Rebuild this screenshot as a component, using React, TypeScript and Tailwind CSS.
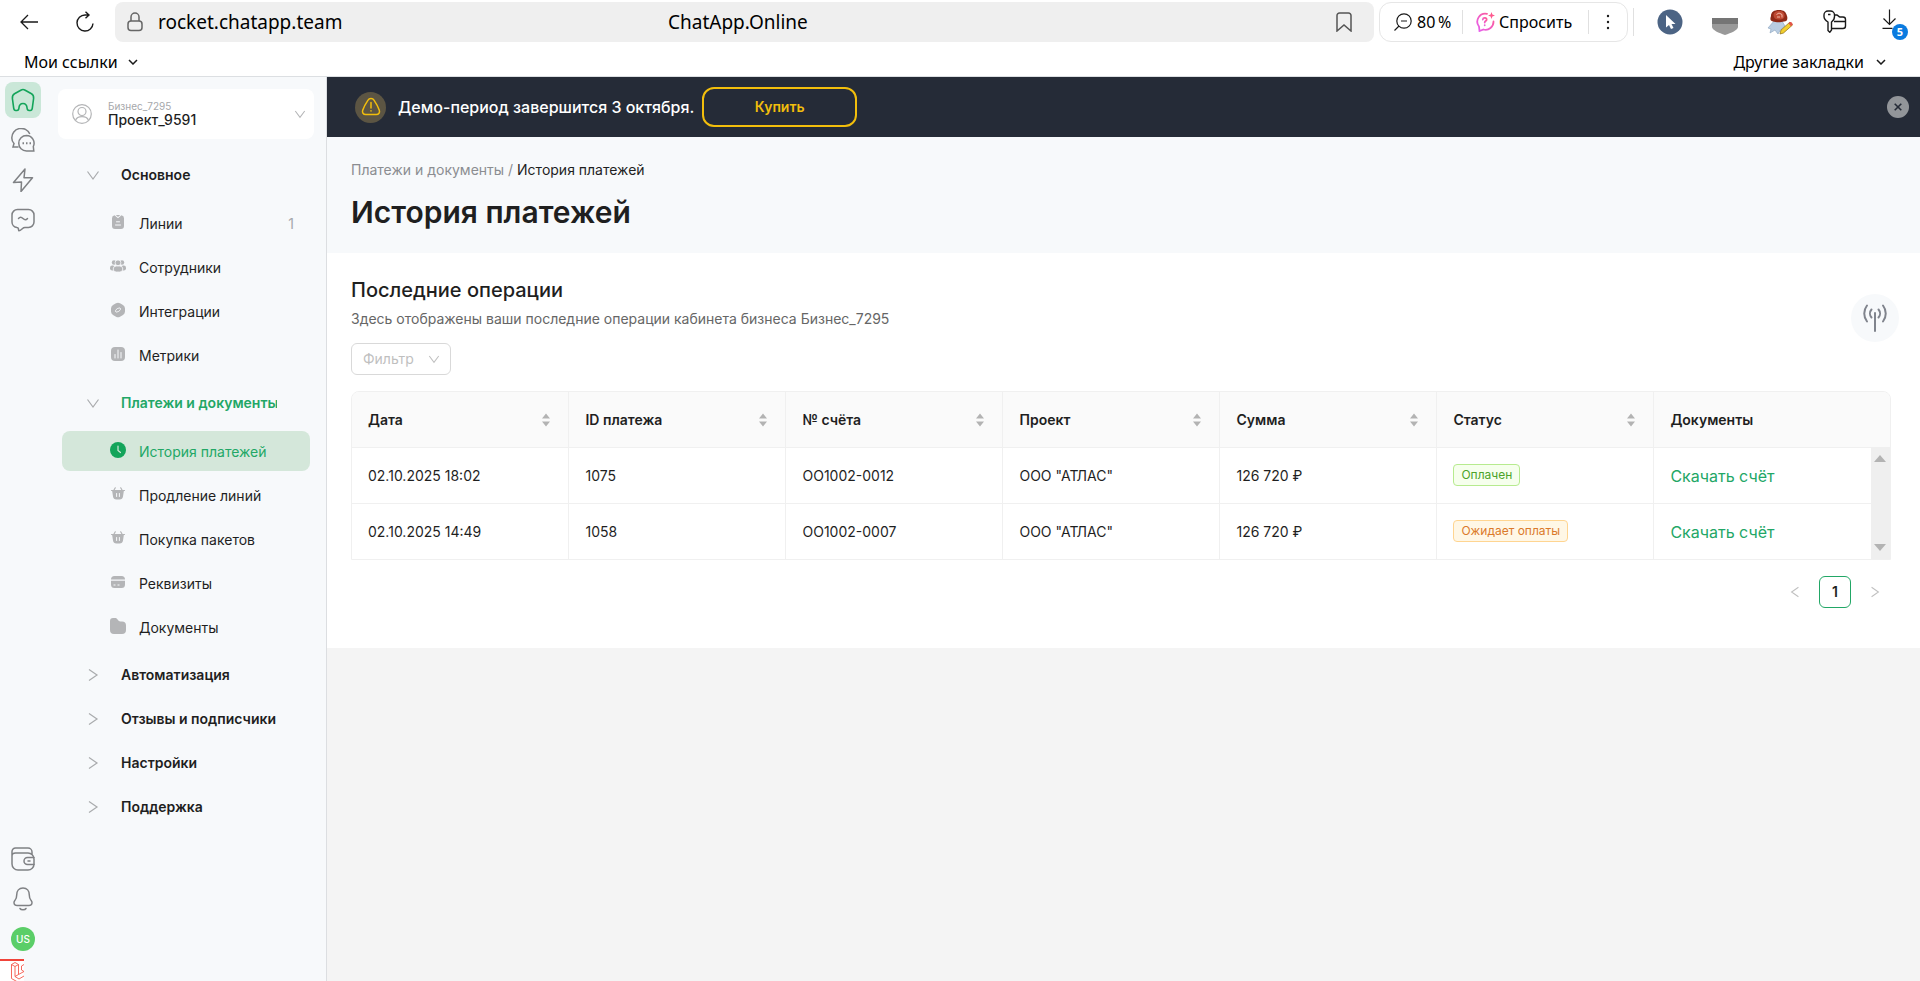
import type { ReactNode } from "react";

type IconProps = { className?: string };

const ChevronDown = ({ className = "" }: IconProps) => (
  <svg viewBox="0 0 14 14" className={className} fill="none" stroke="currentColor" strokeWidth="1.2">
    <path d="M1.5 3.5 7 11l5.5-7.5" />
  </svg>
);

const ChevronRight = ({ className = "" }: IconProps) => (
  <svg viewBox="0 0 14 14" className={className} fill="none" stroke="currentColor" strokeWidth="1.2">
    <path d="M3 1.5 11 7l-8 5.5" />
  </svg>
);

const SmallChevron = () => (
  <svg viewBox="0 0 10 6" className="w-[10px] h-[6px]" fill="none" stroke="#1a1a1a" strokeWidth="1.5">
    <path d="M1 1l4 4 4-4" />
  </svg>
);

const navIcons: Record<string, ReactNode> = {
  lines: (
    <svg viewBox="0 0 16 16" className="size-4" fill="#b4b5b7">
      <path d="M4.500 1.300 8 4.200l3.500-2.900A3 3 0 0 1 14 4.300v7.700a3 3 0 0 1-3 3H5a3 3 0 0 1-3-3V4.300A3 3 0 0 1 4.500 1.300z" />
      <path d="M5.700 1h4.600L8 2.900z" />
      <path d="M6.500 7.800h3M5.500 11h5" stroke="#f7f9fb" strokeLinecap="round" />
    </svg>
  ),
  staff: (
    <svg viewBox="0 0 16 16" className="size-4" fill="#b4b5b7">
      <circle cx="4" cy="4.500" r="2.200" />
      <circle cx="12" cy="4.500" r="2.200" />
      <circle cx="8" cy="4.800" r="2.900" stroke="#f7f9fb" strokeWidth=".8" />
      <rect x="0" y="7.500" width="5" height="5" rx="2.200" />
      <rect x="11" y="7.500" width="5" height="5" rx="2.200" />
      <rect x="3.200" y="8" width="9.600" height="6" rx="3" stroke="#f7f9fb" strokeWidth=".8" />
    </svg>
  ),
  integrations: (
    <svg viewBox="0 0 16 16" className="size-4" fill="#b4b5b7">
      <path d="M6 1.300a4 4 0 0 1 4 0l3 1.700a4 4 0 0 1 2 3.400v3.200a4 4 0 0 1-2 3.400l-3 1.700a4 4 0 0 1-4 0l-3-1.700a4 4 0 0 1-2-3.400V6.400A4 4 0 0 1 3 3z" />
      <path d="M7.200 10c-1.900.5-2.200-1.200-1-2.400s2.100-1.600 2.700-1.100M8.800 6c1.900-.5 2.200 1.200 1 2.400s-2.100 1.600-2.700 1.100" stroke="#f7f9fb" fill="none" />
    </svg>
  ),
  metrics: (
    <svg viewBox="0 0 16 16" className="size-4" fill="#b4b5b7">
      <rect x="1" y="1" width="14" height="14" rx="4" />
      <path d="M5 8.500V12M8 4v8M11 6.500V12" stroke="#f7f9fb" strokeLinecap="round" />
    </svg>
  ),
  history: (
    <svg viewBox="0 0 16 16" className="size-4">
      <circle cx="8" cy="8" r="8" fill="#13a45a" />
      <path d="M8 4v4.500l2.500 2" stroke="#d4e7da" strokeWidth="1.200" fill="none" strokeLinecap="round" />
    </svg>
  ),
  basket: (
    <svg viewBox="0 0 16 16" className="size-4" fill="#b4b5b7">
      <path d="M4 4 5.300 1.800M12 4l-1.300-2.200M1.500 4.500h13" stroke="#b4b5b7" strokeLinecap="round" strokeWidth="1.200" />
      <path d="M2 4h12l-1 6.500A3.500 3.500 0 0 1 9.600 13.500H6.400A3.500 3.500 0 0 1 3 10.500z" />
      <path d="M6.600 7.500v3M9.400 7.500v3" stroke="#f7f9fb" strokeLinecap="round" />
    </svg>
  ),
  card: (
    <svg viewBox="0 0 16 16" className="size-4" fill="#b4b5b7">
      <path d="M1 5.500A3.500 3.500 0 0 1 4.500 2h7A3.500 3.500 0 0 1 15 5.500zM1 6.700h14v3.800a3.500 3.500 0 0 1-3.500 3.500h-7A3.500 3.500 0 0 1 1 10.500z" />
      <path d="M3.500 11h2M7.500 11h2" stroke="#f7f9fb" />
    </svg>
  ),
  folder: (
    <svg viewBox="0 0 16 16" className="size-4" fill="#b4b5b7">
      <path d="M0 3a3 3 0 0 1 3-3h2c1.500 0 2 .6 2.600 1.600S9 3.400 10.500 3.400H12a4 4 0 0 1 4 4V12a4 4 0 0 1-4 4H4a4 4 0 0 1-4-4z" />
    </svg>
  ),
};

type NavItem = { label: string; icon: string; count?: number; active?: boolean };
type NavGroup = { label: string; open?: boolean; active?: boolean; items?: NavItem[] };

const navGroups: NavGroup[] = [
  {
    label: "Основное",
    open: true,
    items: [
      { label: "Линии", icon: "lines", count: 1 },
      { label: "Сотрудники", icon: "staff" },
      { label: "Интеграции", icon: "integrations" },
      { label: "Метрики", icon: "metrics" },
    ],
  },
  {
    label: "Платежи и документы",
    open: true,
    active: true,
    items: [
      { label: "История платежей", icon: "history", active: true },
      { label: "Продление линий", icon: "basket" },
      { label: "Покупка пакетов", icon: "basket" },
      { label: "Реквизиты", icon: "card" },
      { label: "Документы", icon: "folder" },
    ],
  },
  { label: "Автоматизация" },
  { label: "Отзывы и подписчики" },
  { label: "Настройки" },
  { label: "Поддержка" },
];

const columns = ["Дата", "ID платежа", "№ счёта", "Проект", "Сумма", "Статус"];

const payments = [
  { date: "02.10.2025 18:02", id: "1075", invoice: "ОО1002-0012", project: 'ООО "АТЛАС"', sum: "126 720 ₽", status: "Оплачен", paid: true },
  { date: "02.10.2025 14:49", id: "1058", invoice: "ОО1002-0007", project: 'ООО "АТЛАС"', sum: "126 720 ₽", status: "Ожидает оплаты", paid: false },
];

function BrowserBar() {
  return (
    <div className="border-b border-[#dcdfe2] bg-white font-['Noto_Sans',sans-serif] text-black">
      <div className="flex items-center pt-[2px] h-[42px]">
        <button aria-label="Назад" className="ml-5">
          <svg viewBox="0 0 18 16" className="w-[18px] h-4" fill="none" stroke="#1a1a1a" strokeWidth="1.300">
            <path d="M8 1 1 8l7 7M1 8h17" />
          </svg>
        </button>
        <button aria-label="Обновить" className="ml-[38px]">
          <svg viewBox="0 0 18 22" className="w-[18px] h-[22px]" fill="none" stroke="#1a1a1a" strokeWidth="1.400">
            <path d="M13 4H9a8 8 0 1 0 8 8.500M9.500.7 13 4 9.500 7.300" />
          </svg>
        </button>
        <div className="ml-[21px] flex h-10 flex-1 items-center rounded-lg bg-[#efefef] px-3">
          <svg viewBox="0 0 16 20" className="mr-[15px] w-4 h-5 shrink-0" fill="none" stroke="#666" strokeWidth="1.500">
            <rect x="1" y="9" width="14" height="9.500" rx="3" />
            <path d="M4 9V5a4 4 0 0 1 8 0v4" />
          </svg>
          <span className="w-[510px] text-[19px]">rocket.chatapp.team</span>
          <span className="flex-1 text-[19px]">ChatApp.Online</span>
          <svg viewBox="0 0 16 20" className="mr-[10px] w-4 h-5" fill="none" stroke="#555" strokeWidth="1.500">
            <path d="M1 19V3.500A2.500 2.500 0 0 1 3.500 1h9A2.500 2.500 0 0 1 15 3.500V19l-7-6z" />
          </svg>
        </div>
        <div className="ml-[5px] flex h-10 w-[249px] items-center rounded-xl border border-[#e6e6e6] text-base">
          <button className="flex w-[83px] items-center gap-[5px] border-r border-[#e0e0e0] pl-[14px]">
            <svg viewBox="0 0 18 18" className="size-[18px]" fill="none" stroke="#1a1a1a" strokeWidth="1.200">
              <circle cx="10" cy="8" r="7.200" />
              <path d="M7 8h6M5 13l-4.500 4.500" />
            </svg>
            <span>80{"\u2009"}%</span>
          </button>
          <button className="flex w-[126px] items-center gap-1 border-r border-[#e0e0e0] pl-3">
            <svg viewBox="0 0 20 20" className="size-5" fill="none" stroke="url(#ask)" strokeWidth="1.800" strokeLinecap="round">
              <defs>
                <linearGradient id="ask" x1="0" y1="1" x2="1" y2="0">
                  <stop offset="0" stopColor="#e560f0" />
                  <stop offset="1" stopColor="#ff5a90" />
                </linearGradient>
              </defs>
              <path d="M12 1.800A8 8 0 0 0 4 14.500l.5 4.500 4-1.500A8 8 0 0 0 18.500 9.500" />
              <path d="M7.800 7.500c.3-2.300 4.200-2 3.800.2-.3 1.300-1.900 1.300-1.900 2.800M9.700 13.200v.1" />
              <path d="M16.500 0l.9 2.600L20 3.500l-2.600.9-.9 2.600-.9-2.600-2.600-.9 2.600-.9z" fill="#ff5a90" stroke="none" />
            </svg>
            <span>Спросить</span>
          </button>
          <button aria-label="Меню" className="flex flex-1 justify-center">
            <svg viewBox="0 0 4 16" className="w-1 h-4" fill="#1a1a1a">
              <circle cx="2" cy="2" r="1.200" />
              <circle cx="2" cy="8" r="1.200" />
              <circle cx="2" cy="14" r="1.200" />
            </svg>
          </button>
        </div>
        <div className="ml-[5px] flex items-center border-l border-[#e0e0e0] pl-[23px]">
          <svg viewBox="0 0 26 26" className="size-[26px]">
            <circle cx="13" cy="13" r="12.500" fill="#4c6484" />
            <path d="M9 6v12.500l3-2.500 2 4 2.500-1-2-4h4z" fill="#fff" />
          </svg>
          <svg viewBox="0 0 26 26" className="ml-[29px] size-[26px]">
            <path d="M0 9h26v6H0z" fill="#757575" />
            <path d="M0 15h26v3c0 3-7 6-13 8-6-2-13-5-13-8z" fill="#999" />
          </svg>
          <svg viewBox="0 0 26 26" className="ml-[29px] size-[26px]">
            <path d="M7 12 1 19l3 1-1 4 5-3 3 4 3-5 4-3-3-5z" fill="#b9cde2" stroke="#8aa2bd" strokeWidth=".6" />
            <path d="M4 7c0-4 3-6 8-6s7 2 8 6c1 3 0 5.500-3 5.500-3 1-8 1-11 0C3 12 3 10 4 7z" fill="#8f2a18" />
            <path d="M6.500 6c0-3 3-4 6-4s5 1.500 5 4.500-2 4-5.500 4-5.500-1.500-5.500-4.500z" fill="#bf4a33" />
            <path d="M9.500 5.500l2.500-1.500 3 1.500v3M10 8h3" stroke="#f0b8a8" fill="none" />
            <path d="m13 25 1-4 9-8 2.500 3-9 8z" fill="#f2cf2e" stroke="#8a6a10" strokeWidth=".7" />
            <path d="m21.500 14.500 1.500-1.500c1.500-.5 3 1.500 2.500 3l-1.500 1.300z" fill="#e2544a" />
          </svg>
          <svg viewBox="0 0 24 24" className="ml-[30px] size-6" fill="none" stroke="#1a1a1a" strokeWidth="1.400" strokeLinejoin="round">
            <path d="M5 12C2.500 10.500 1 9.500 1 6.500V5a4 4 0 0 1 4-4h2.500a4 4 0 0 1 4 4v1.500c0 3-1.500 4.500-3 5.500v8l-1.750 2.300L5 20.500zM5 4.500h2.500" />
            <path d="M11.500 5h2.200c1.300 0 2 2 3.300 2h3a2.500 2.500 0 0 1 2.500 2.500V16a2.500 2.500 0 0 1-2.500 2.500H8.500M11 11.500h11.500" />
          </svg>
          <div className="relative ml-[34px] mr-2 w-[31px] h-7">
            <svg viewBox="0 0 20 22" className="w-5 h-[22px]" fill="none" stroke="#1a1a1a" strokeWidth="1.200">
              <path d="M8.500 1.500v15M2.500 10.500l6 6 6-6M1.500 20.300h10" />
            </svg>
            <span className="absolute right-1 -bottom-1 flex size-4 items-center justify-center rounded-full bg-[#0a7be0] text-[11px] font-bold text-white">5</span>
          </div>
        </div>
      </div>
      <div className="flex h-[34px] items-center justify-between pt-[6px] pr-[34px] pl-6 text-base">
        <button className="flex items-center gap-[10px]">Мои ссылки <SmallChevron /></button>
        <button className="flex items-center gap-3">Другие закладки <SmallChevron /></button>
      </div>
    </div>
  );
}

function IconRail() {
  return (
    <div className="flex w-[46px] shrink-0 flex-col items-center bg-[#f7f9fb] pt-[5px] text-[#7f8184]">
      <button aria-label="Главная" className="flex size-9 items-center justify-center rounded-lg bg-[#cae7d8]">
        <svg viewBox="0 0 24 24" className="size-6" fill="none" stroke="#13a45a" strokeWidth="1.600" strokeLinejoin="round">
          <path d="M12 1.500c.7 0 1.500.3 2.200.7l6.300 3.500c1.500.9 2.300 2.600 2.100 4.800l-1.300 9.700c-.2 1.500-.8 2.300-2 2.300h-1.200c-1.200 0-1.900-.8-2-2.200-.2-2.800-1-4.800-4.100-4.800s-3.900 2-4.100 4.800c-.1 1.400-.8 2.200-2 2.200H4.700c-1.200 0-1.800-.8-2-2.300l-1.300-9.700c-.2-2.200.6-3.900 2.100-4.800l6.300-3.500c.7-.4 1.500-.7 2.200-.7z" />
        </svg>
      </button>
      <button aria-label="Чаты" className="mt-[10px]">
        <svg viewBox="0 0 24 24" className="size-6" fill="none" stroke="currentColor" strokeWidth="1.500">
          <path d="M7.500 19H2l1-3.500C1.500 14 .8 12 .8 10a9.400 9.400 0 0 1 18-4" />
          <path d="M15.500 7.500a7.700 7.700 0 0 1 6.800 11l.5 4.500H15.500a7.750 7.750 0 1 1 0-15.500z" />
          <path d="M11.500 15.300h1.500M15 15.300h1.500M18.500 15.300H20" strokeWidth="2" />
        </svg>
      </button>
      <button aria-label="Автоматизация" className="mt-4">
        <svg viewBox="0 0 24 24" className="size-6" fill="none" stroke="currentColor" strokeWidth="1.500" strokeLinejoin="round">
          <path d="M14 1 2.500 14.500 10.500 14 10 23.500 21.500 9.800H13z" />
        </svg>
      </button>
      <button aria-label="Сообщения" className="mt-4">
        <svg viewBox="0 0 24 24" className="size-6" fill="none" stroke="currentColor" strokeWidth="1.500" strokeLinecap="round" strokeLinejoin="round">
          <path d="M6.500 1.500h11a5.500 5.500 0 0 1 5.500 5.500v7a5.500 5.500 0 0 1-5.500 5.500h-3.500c-1.500 0-2 .6-3 1.500s-2 1.800-3 1.800.3-3.300-2-3.300A5.500 5.500 0 0 1 1 14V7a5.500 5.500 0 0 1 5.500-5.500z" />
          <path d="M7.500 10.500c1.500-1.800 2.800-1.600 4.500 0s3 1.800 4.500 0" />
        </svg>
      </button>
      <button aria-label="Кошелёк" className="mt-auto">
        <svg viewBox="0 0 24 24" className="size-6" fill="none" stroke="currentColor" strokeWidth="1.500" strokeLinecap="round">
          <path d="M1 7v10a6 6 0 0 0 6 6h10a6 6 0 0 0 6-6v-5a6 6 0 0 0-6-6H4.500C2.500 6 1 7 1 9V4.500A3.500 3.500 0 0 1 4.500 1H17a4 4 0 0 1 4 4v2" />
          <path d="M23 10.500h-6.500a3.500 3.500 0 0 0 0 7H23M17 14h2" />
        </svg>
      </button>
      <button aria-label="Уведомления" className="mt-4">
        <svg viewBox="0 0 24 24" className="size-6" fill="none" stroke="currentColor" strokeWidth="1.500" strokeLinecap="round">
          <path d="M12 1c4 0 6.300 3 6.300 7 0 3.500.7 4 1.900 5.500 1.800 2.300.6 5-2.200 5H6c-2.800 0-4-2.700-2.200-5C5 12 5.700 11.500 5.700 8c0-4 2.300-7 6.300-7z" />
          <path d="M9 21.500c1 1.700 5 1.700 6 0" />
        </svg>
      </button>
      <button className="mt-4 size-6 rounded-full bg-[#5bce68] text-[10px] font-medium text-white">US</button>
      <div className="mt-2 h-[22px] w-6 self-start border-t-2 border-[#f0443a] bg-white">
        <svg viewBox="0 0 24 20" className="w-6 h-5" fill="none" stroke="#f4584c" strokeWidth=".9">
          <path d="M11.500 3.500 15 1.500 18.500 3.500v10L24 10.500M11.500 3.500v14l7 4M11.500 3.500 15 5.500v10l3.500-2M15 5.500l3.500-2M24 3.500l-2.500 1.500V9L24 10.500M15 15.500l4 2.500 5-3" />
        </svg>
      </div>
    </div>
  );
}

function Sidebar() {
  return (
    <aside className="w-[281px] shrink-0 border-r border-[#dcdee1] bg-[#f7f9fb] pt-3 pr-3 pl-3">
      <button className="flex h-[50px] w-full items-center rounded-lg bg-white px-[14px] text-left">
        <svg viewBox="0 0 20 20" className="size-5" fill="none" stroke="#b4b5b7" strokeWidth="1.200">
          <circle cx="10" cy="10" r="9.300" />
          <circle cx="10" cy="7.500" r="4" />
          <path d="M3.500 16.500c1-3 4-3.800 6.500-3.800s5.500.8 6.500 3.800" />
        </svg>
        <span className="ml-4 flex flex-1 flex-col">
          <span className="text-[10px] leading-3 text-[#a6a8ab]">Бизнес_7295</span>
          <span className="text-sm leading-4 font-medium">Проект_9591</span>
        </span>
        <ChevronDown className="-mr-[6px] size-3 text-[#b4b5b7]" />
      </button>
      <nav className="mt-4 flex flex-col gap-1 px-1">
        {navGroups.map((group) => (
          <div key={group.label}>
            <button
              className={`flex h-10 w-full items-center pl-6 text-left text-sm font-semibold ${group.active ? "text-[#22a766]" : ""}`}
            >
              {group.open ? (
                <ChevronDown className="size-[14px] text-[#a9abad]" />
              ) : (
                <ChevronRight className="size-[14px] text-[#a9abad]" />
              )}
              <span className="ml-[21px] w-[156px] overflow-hidden whitespace-nowrap">{group.label}</span>
            </button>
            {group.items && (
              <ul className="flex flex-col gap-1 pt-2 pb-1">
                {group.items.map((item) => (
                  <li key={item.label}>
                    <a
                      href="#"
                      className={`flex h-10 items-center rounded-lg pt-[2px] pr-4 pl-12 text-sm ${item.active ? "bg-[#d4e7da] text-[#22a766]" : ""}`}
                    >
                      <span className="mb-1">{navIcons[item.icon]}</span>
                      <span className="ml-[13px] flex-1">{item.label}</span>
                      {item.count && <span className="text-[#a6a8ab]">{item.count}</span>}
                    </a>
                  </li>
                ))}
              </ul>
            )}
          </div>
        ))}
      </nav>
    </aside>
  );
}

function DemoBanner() {
  return (
    <div className="flex h-[60px] items-center bg-[#252b37] pr-[11px] pl-7">
      <span className="flex size-[31px] items-center justify-center rounded-full bg-[#5c5543]">
        <svg viewBox="0 0 20 20" className="size-5" fill="none" stroke="#f2be0c" strokeWidth="1.500" strokeLinecap="round">
          <path d="M7 3.200C8.300.8 11.700.8 13 3.200c2 3 4.200 7 5.300 10 .8 2.300-.6 4.300-3 4.300H4.700c-2.400 0-3.800-2-3-4.300 1.100-3 3.300-7 5.300-10zM10 5.500V11M10 13.800v.2" />
        </svg>
      </span>
      <span className="ml-3 text-base font-medium text-white">Демо-период завершится 3 октября.</span>
      <button className="ml-2 h-10 w-[155px] rounded-xl border-2 border-[#f2be0c] text-sm font-semibold text-[#f2be0c]">
        Купить
      </button>
      <button aria-label="Закрыть" className="ml-auto flex size-[22px] items-center justify-center rounded-full bg-[#929599]">
        <svg viewBox="0 0 8 8" className="size-2" stroke="#252b37" strokeWidth="1.600">
          <path d="M.7.7l6.600 6.600M7.300.7.700 7.300" />
        </svg>
      </button>
    </div>
  );
}

const SortIcon = () => (
  <svg viewBox="0 0 8 14" className="w-2 h-[14px]" fill="#b3b3b3">
    <path d="M4 .5 8 5.500H0zM4 13.500 8 8.500H0z" />
  </svg>
);

function PaymentsTable() {
  return (
    <div className="mt-4 overflow-hidden rounded-t-lg border border-[#f0f0f0]">
      <table className="w-full table-fixed text-left text-sm">
        <colgroup>
          {columns.map((name) => (
            <col key={name} />
          ))}
          <col />
          <col className="w-[19px]" />
        </colgroup>
        <thead>
          <tr className="h-[55px] bg-[#fafafa]">
            {columns.map((name) => (
              <th key={name} className="border-r border-[#f0f0f0] px-4 pt-[2px] font-semibold">
                <span className="flex items-center justify-between">
                  {name}
                  <button aria-label={`Сортировать: ${name}`} className="mr-[2px]">
                    <SortIcon />
                  </button>
                </span>
              </th>
            ))}
            <th colSpan={2} className="px-4 pt-[2px] font-semibold">Документы</th>
          </tr>
        </thead>
        <tbody>
          {payments.map((row, idx) => (
            <tr key={row.id} className="h-14">
              {[row.date, row.id, row.invoice, row.project, row.sum].map((value, i) => (
                <td key={i} className="border-t border-r border-[#f0f0f0] px-4 pt-[2px]">{value}</td>
              ))}
              <td className="border-t border-r border-[#f0f0f0] px-4">
                <span
                  className={`inline-block h-[22px] rounded border px-[7px] text-xs leading-5 ${
                    row.paid ? "border-[#b7eb8f] bg-[#f6ffed] text-[#4ba32a]" : "border-[#ffd591] bg-[#fff7e6] text-[#db7a2b]"
                  }`}
                >
                  {row.status}
                </span>
              </td>
              <td className="border-t border-[#f0f0f0] px-4 pt-[2px]">
                <a href="#" className="text-base text-[#22a766]">Скачать счёт</a>
              </td>
              {idx === 0 && (
                <td rowSpan={2} className="bg-[#efefef]">
                  <div className="flex h-24 flex-col items-center justify-between">
                    <svg viewBox="0 0 12 7" className="w-3 h-[7px]" fill="#b3b3b3"><path d="M6 0l6 7H0z" /></svg>
                    <svg viewBox="0 0 12 7" className="w-3 h-[7px]" fill="#b3b3b3"><path d="M6 7l6-7H0z" /></svg>
                  </div>
                </td>
              )}
            </tr>
          ))}
        </tbody>
      </table>
    </div>
  );
}

export default function App() {
  return (
    <div className="flex min-h-screen flex-col bg-[#f4f4f4] font-['Inter',sans-serif] text-[#1f1f1f]">
      <BrowserBar />
      <div className="flex flex-1">
        <IconRail />
        <Sidebar />
        <main className="min-w-0 flex-1">
          <DemoBanner />
          <header className="h-[116px] bg-[#f7f9fb] px-6 pt-[23px]">
            <p className="text-sm text-[#8b8d91]">
              Платежи и документы / <span className="text-[#1f1f1f]">История платежей</span>
            </p>
            <h1 className="mt-3 text-[30px] leading-10 font-semibold">История платежей</h1>
          </header>
          <section className="bg-white pt-[23px] pr-[29px] pb-10 pl-6">
            <div className="relative">
              <h2 className="text-xl leading-7 font-medium">Последние операции</h2>
              <p className="mt-[5px] text-sm leading-5 text-[#666]">
                Здесь отображены ваши последние операции кабинета бизнеса Бизнес_7295
              </p>
              <button aria-label="Трансляция" className="absolute top-[18px] -right-2 flex size-12 items-center justify-center rounded-full bg-[#f7f9fb]">
                <svg viewBox="0 0 28 28" className="size-7" fill="none" stroke="#80848d" strokeWidth="2" strokeLinecap="round">
                  <path d="M14 9v18M10.500 5.500a6 6 0 0 0 0 8M17.500 5.500a6 6 0 0 1 0 8M6 1.500a13 13 0 0 0 0 16M22 1.500a13 13 0 0 1 0 16" />
                </svg>
              </button>
            </div>
            <div className="relative mt-[14px] w-[100px]">
              <select aria-label="Фильтр" className="h-8 w-full appearance-none rounded-md border border-[#d9d9d9] bg-white pl-[11px] text-sm text-[#bfbfbf]">
                <option>Фильтр</option>
              </select>
              <ChevronDown className="pointer-events-none absolute top-[10px] right-[11px] size-3 text-[#bfbfbf]" />
            </div>
            <PaymentsTable />
            <div className="mt-4 flex items-center justify-end gap-2">
              <button aria-label="Предыдущая" className="flex size-8 items-center justify-center">
                <ChevronRight className="size-3 rotate-180 text-[#bfbfbf]" />
              </button>
              <button className="size-8 rounded-md border border-[#22a766] text-sm font-semibold">1</button>
              <button aria-label="Следующая" className="flex size-8 items-center justify-center">
                <ChevronRight className="size-3 text-[#bfbfbf]" />
              </button>
            </div>
          </section>
        </main>
      </div>
    </div>
  );
}
